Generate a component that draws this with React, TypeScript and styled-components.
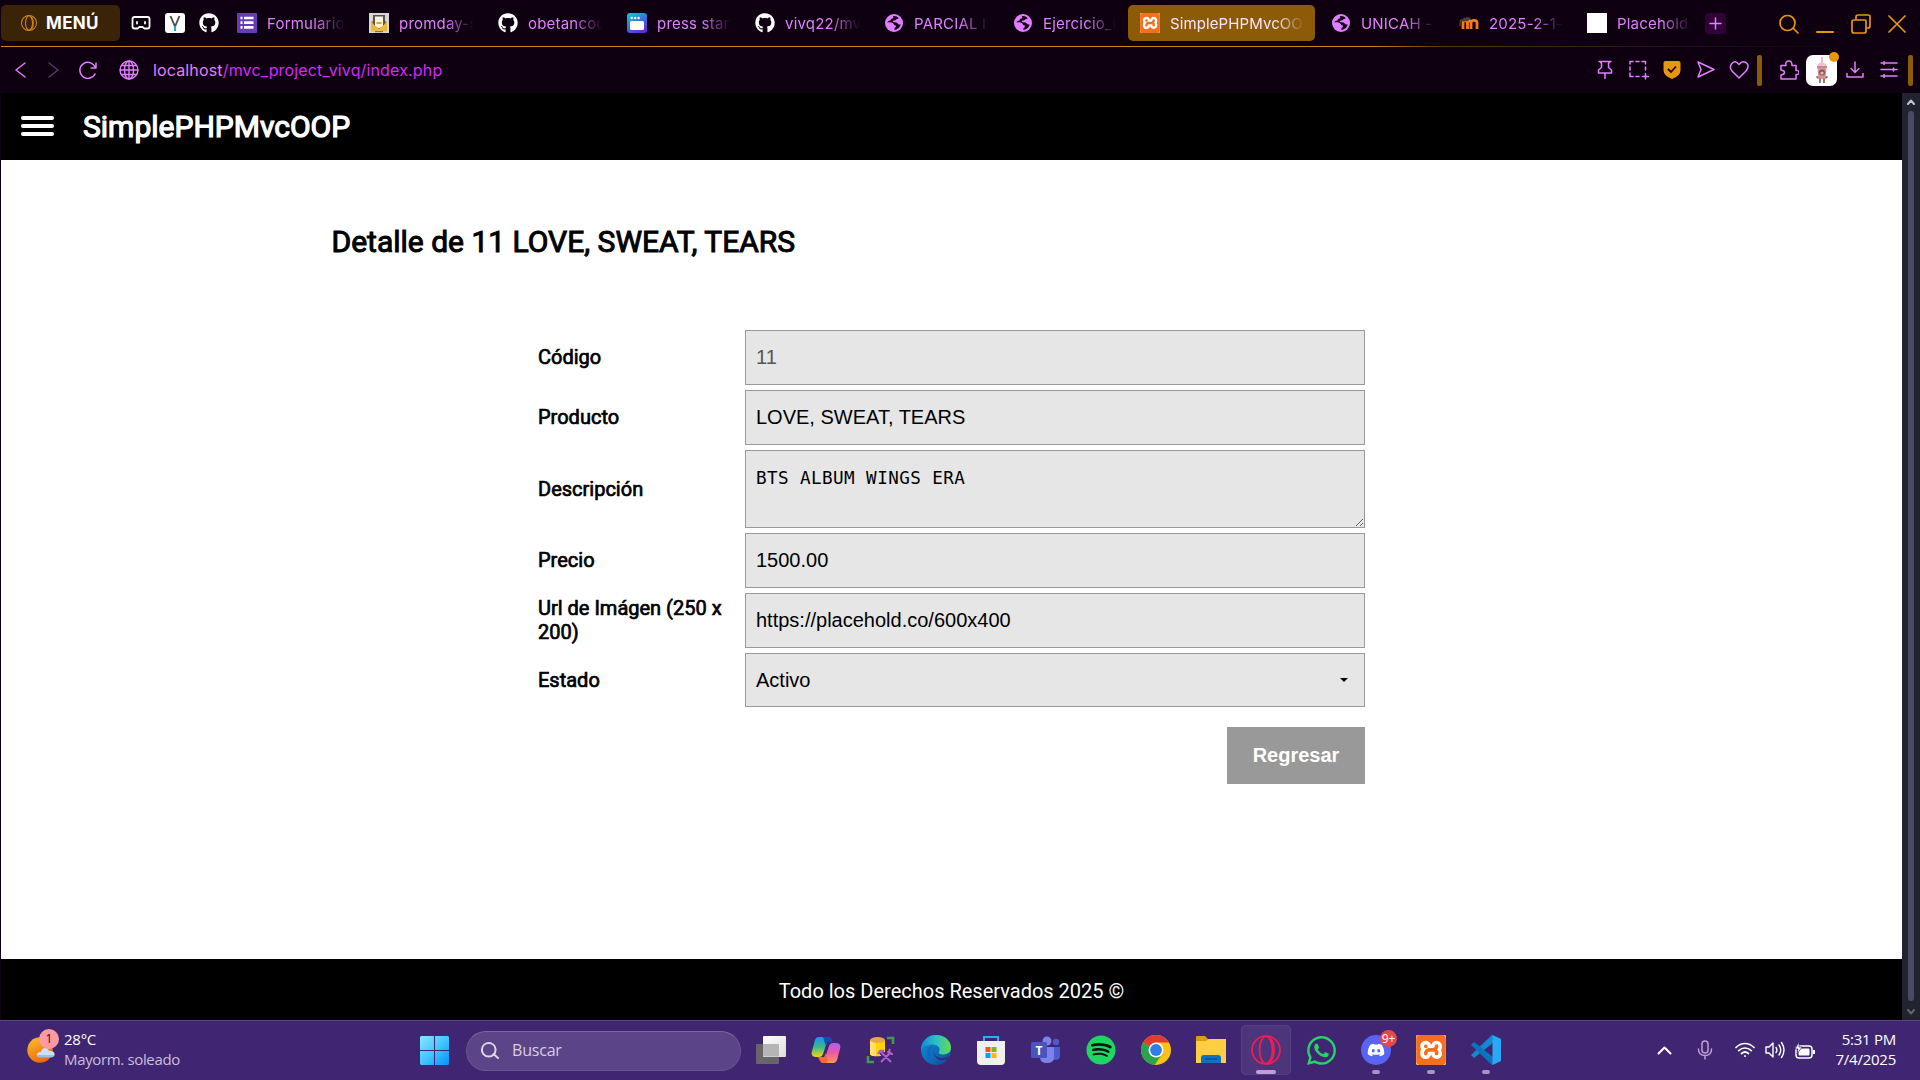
import React from "react";
import styled, { createGlobalStyle, css } from "styled-components";
import { FaGithub, FaWhatsapp, FaSpotify, FaDiscord } from "react-icons/fa";
import { SiXampp } from "react-icons/si";

const Global = createGlobalStyle`
  * { box-sizing: border-box; }
  body { margin: 0; background: #0f0011; }
  svg { display: block; flex: none; }
`;

const ui = `Inter, "Liberation Sans", sans-serif`;
const page = `Roboto, "Liberation Sans", sans-serif`;
const shell = `"Open Sans", "Noto Sans", sans-serif`;
const violet = "#e07fff";
const amber = "#e8960c";

const Screen = styled.div`
  width: 1920px;
  height: 1080px;
  display: flex;
  flex-direction: column;
  overflow: hidden;
  background: #0f0011;
`;

/* ---------- browser chrome ---------- */
const TabStrip = styled.header`
  height: 46px;
  display: flex;
  align-items: flex-start;
  padding: 5px 14px 0 1px;
  font: 400 15px ${ui};
  color: ${violet};
`;
const StripLine = styled.div`
  height: 1px;
  margin-left: 1px;
  background: linear-gradient(90deg, #cf860f 0, #cf860f 1370px, #5a360b 1440px, #2a1510 1640px, #0f0011 1860px);
`;
const MenuButton = styled.button`
  width: 119px;
  height: 36px;
  margin-right: 11px;
  padding: 0 0 0 20px;
  border: 0;
  border-radius: 5px;
  background: #3a2307;
  color: #fff;
  display: flex;
  align-items: center;
  gap: 9px;
  font: 700 17px ${ui};
  letter-spacing: 0.3px;
`;
const Pinned = styled.div`
  width: 94px;
  height: 36px;
  display: flex;
  align-items: center;
  gap: 14px;
`;
const Tab = styled.div<{ $w: number; $active?: boolean }>`
  width: ${(p) => p.$w}px;
  height: 36px;
  flex: none;
  padding: 0 12px;
  display: flex;
  align-items: center;
  gap: 10px;
  ${(p) =>
    p.$active &&
    css`
      margin-right: 4px;
      border-radius: 5px;
      background: #8b5b08;
      color: #fbe3ff;
    `}
`;
const TabTitle = styled.span`
  flex: 1;
  overflow: hidden;
  white-space: nowrap;
  padding-top: 2px;
  line-height: 24px;
  letter-spacing: 0.2px;
  mask-image: linear-gradient(90deg, #000 60%, transparent 100%);
`;
const ActiveTitle = styled(TabTitle)`
  margin-right: -2px;
  letter-spacing: 0.1px;
  mask-image: linear-gradient(90deg, #000 78%, transparent 100%);
`;
const White = styled.span`
  width: 20px;
  height: 20px;
  flex: none;
  background: #fff;
`;
const XamppTile = styled.span<{ $w: number; $h: number }>`
  width: ${(p) => p.$w}px;
  height: ${(p) => p.$h}px;
  flex: none;
  display: grid;
  place-items: center;
  overflow: hidden;
  border-radius: 2px;
  color: #fff;
  background: #f4701c;
`;
const NewTab = styled.button`
  width: 21px;
  height: 21px;
  margin: 8px 0 0 2px;
  padding: 4px;
  border: 0;
  border-radius: 4px;
  background: #320038;
`;
const WindowButtons = styled.div`
  height: 37px;
  margin-left: auto;
  display: flex;
  align-items: center;
  gap: 17px;
  color: ${amber};
`;
const AddressBar = styled.div`
  height: 46px;
  display: flex;
  align-items: center;
  padding: 0 7px 0 15px;
  color: ${violet};
`;
const NavButtons = styled.div`
  display: flex;
  align-items: center;
  gap: 20px;
  margin-right: 22px;
`;
const Address = styled.div`
  margin-left: 14px;
  font: 400 16px ${ui};
  letter-spacing: 0.15px;
  margin-top: -1px;
  color: #d02cf4;
  b { font-weight: 400; color: ${violet}; }
`;
const Actions = styled.div`
  margin-left: auto;
  display: flex;
  align-items: center;
  gap: 14px;
`;
const PageActions = styled.div`
  display: flex;
  align-items: center;
  gap: 13.5px;
`;
const Menu = styled.span`
  margin-left: 2px;
`;
const Divider = styled.span<{ $l: number; $r: number }>`
  width: 5px;
  height: 31px;
  margin: 0 ${(p) => p.$r - 14}px 0 ${(p) => p.$l - 14}px;
  border-radius: 2px;
  background: #8b5b08;
`;
const Avatar = styled.span`
  position: relative;
  width: 31px;
  height: 31px;
  margin: 0 -5px 0 -7px;
  border-radius: 7px;
  background: #fff;
  display: grid;
  place-items: center;
`;
const Dot = styled.i`
  position: absolute;
  right: -2px;
  top: -3px;
  width: 10px;
  height: 10px;
  border-radius: 50%;
  background: ${amber};
`;

/* ---------- web page ---------- */
const Viewport = styled.div`
  height: 927px;
  display: flex;
  padding-left: 1px;
`;
const Site = styled.div`
  width: 1901px;
  display: flex;
  flex-direction: column;
  background: #fff;
  color: #000;
  font-family: ${page};
`;
const SiteHeader = styled.header`
  height: 67px;
  display: flex;
  align-items: center;
  gap: 29px;
  padding: 0 20px;
  background: #000;
  color: #fff;
`;
const Burger = styled.div`
  width: 33px;
  display: grid;
  gap: 4px;
  margin-top: -2px;
  i { height: 4px; border-radius: 2px; background: #fff; }
`;
const Brand = styled.h1`
  margin: 0;
  font: 400 30px/36px ${page};
  -webkit-text-stroke: 1.2px currentColor;
`;
const Main = styled.main`
  flex: 1;
  padding: 64px 536px 0 330.5px;
`;
const Title = styled.h2`
  margin: 0 0 70px;
  font: 400 30px/36px ${page};
  -webkit-text-stroke: 1px currentColor;
`;
const Form = styled.form`
  width: 827px;
  margin: 0 0 0 206.5px;
  display: grid;
  gap: 5px;
`;
const Row = styled.div<{ $h?: number }>`
  height: ${(p) => p.$h ?? 55}px;
  display: grid;
  grid-template-columns: 207px 620px;
  align-items: center;
`;
const Label = styled.label`
  padding: 0 20px 1px 0;
  font: 400 20px/24px ${page};
  -webkit-text-stroke: 0.7px currentColor;
`;
const box = css`
  width: 100%;
  height: 100%;
  margin: 0;
  padding: 0 10px;
  border: 1px solid #999;
  border-radius: 0;
  outline: 0;
  background: #e6e6e6;
  color: #000;
  font: 400 20px "Liberation Sans", Arial, sans-serif;
`;
const Input = styled.input<{ $dim?: boolean }>`
  ${box}
  ${(p) => p.$dim && "color: #555;"}
`;
const Area = styled.textarea`
  ${box}
  display: block;
  padding: 15px 10px;
  font: 400 17.6px/24px "DejaVu Sans Mono", monospace;
  letter-spacing: 0.42px;
  overflow: hidden;
`;
const SelectBox = styled.div`
  ${box}
  display: flex;
  align-items: center;
  justify-content: space-between;
  padding-right: 16px;
`;
const Back = styled.button`
  width: 138px;
  height: 57px;
  margin: 15px 0 0;
  justify-self: end;
  border: 0;
  background: #999;
  color: #fff;
  font: 700 20px "Liberation Sans", Arial, sans-serif;
`;
const SiteFooter = styled.footer`
  height: 61px;
  display: grid;
  place-items: center;
  padding-top: 3px;
  background: #000;
  color: #fff;
  font: 400 20px ${page};
`;
const Scroll = styled.div`
  width: 18px;
  display: flex;
  flex-direction: column;
  align-items: center;
  padding: 6px 0 4px;
  background: #222331;
`;
const Thumb = styled.div`
  width: 6px;
  height: 890px;
  margin: 6px 0 8px;
  border-radius: 3px;
  background: #4b4a63;
`;

/* ---------- taskbar ---------- */
const Taskbar = styled.footer`
  height: 60px;
  display: flex;
  padding: 0 24px 0 27px;
  border-top: 1px solid #5b4779;
  background: #402672;
  color: #fff;
  font-family: ${shell};
`;
const Weather = styled.div`
  width: 383px;
  display: flex;
  align-items: center;
  gap: 7px;
`;
const WeatherIcon = styled.div`
  position: relative;
  width: 30px;
  height: 40px;
`;
const Count = styled.span<{ $bg: string; $fg: string; $size: number; $top: number; $right: number }>`
  position: absolute;
  top: ${(p) => p.$top}px;
  right: ${(p) => p.$right}px;
  width: ${(p) => p.$size}px;
  height: ${(p) => p.$size}px;
  display: grid;
  place-items: center;
  border-radius: 50%;
  background: ${(p) => p.$bg};
  color: ${(p) => p.$fg};
  font: 400 12px ${shell};
`;
const Stack = styled.div<{ $end?: boolean }>`
  display: flex;
  flex-direction: column;
  align-items: ${(p) => (p.$end ? "flex-end" : "flex-start")};
  margin-bottom: 4px;
  font-size: 15px;
  line-height: 20px;
  letter-spacing: -0.25px;
  white-space: nowrap;
`;
const Muted = styled.span`
  color: #c9bedb;
  letter-spacing: -0.35px;
`;
const Start = styled.div`
  width: 56px;
  display: flex;
  align-items: center;
  padding-left: 10px;
`;
const Search = styled.div`
  width: 275px;
  height: 40px;
  align-self: center;
  padding: 0 0 1px 14px;
  display: flex;
  align-items: center;
  gap: 13px;
  border: 1px solid #6a5490;
  border-top-color: #7c689e;
  border-radius: 20px;
  background: #5b4487;
  color: #d7cee2;
  font-size: 16px;
  letter-spacing: -0.2px;
`;
const Apps = styled.div`
  display: flex;
  align-items: center;
  gap: 5px;
  margin: -1px 0 0 5px;
`;
const TaskApp = styled.div<{ $on?: boolean }>`
  position: relative;
  width: 50px;
  height: 50px;
  display: grid;
  place-items: center;
  border-radius: 5px;
  ${(p) => p.$on && "background: #4d357c; box-shadow: inset 0 0 0 1px #573f84;"}
`;
const Running = styled.i<{ $wide?: boolean }>`
  position: absolute;
  bottom: 1px;
  left: 50%;
  width: ${(p) => (p.$wide ? 20 : 8)}px;
  height: 4px;
  border-radius: 2px;
  transform: translateX(-50%);
  background: ${(p) => (p.$wide ? "#c39ddb" : "#a794c3")};
`;
const Tray = styled.div`
  margin-left: auto;
  display: flex;
  align-items: center;
`;
const TrayIcon = styled.span<{ $gap: number }>`
  margin: -1px ${(p) => p.$gap}px 0 0;
`;

type LineProps = { w: number; h?: number; box?: string; d: string; sw?: number; color?: string; children?: React.ReactNode };
const Line = ({ w, h = w, box: vb, d, sw = 1.5, color = "currentColor", children }: LineProps) => (
  <svg width={w} height={h} viewBox={vb ?? `0 0 ${w} ${h}`} fill="none" stroke={color} strokeWidth={sw} strokeLinecap="round" strokeLinejoin="round">
    <path d={d} />
    {children}
  </svg>
);

const Earth = () => (
  <svg width="20" height="20" viewBox="0 0 20 20">
    <circle cx="10" cy="10" r="9" fill={violet} />
    <path d="M8.800 3.200c1.300 1 .2 2.300-1.200 2.500-.9.200-.5 1.600-1.500 1.900-1 .2-1.800.6-2.900 1.700 2 .4 4.200-.2 5.600.7 1.200.9.800 2 2.100 2.300 1.400.3 1.500 1.500.2 2.300-.7.500-.6 1.300-.9 2.200 3.200-.2 5.800-2.500 6.500-5.400-1.300.4-2.400.3-3-.8-.8-1.400-2.300-1.200-4-1.300-1.100-.1-1.300-1.500-.1-1.800.9-.2 1.500.1 2.200-.8.600-.8 2-.5 2.900-1.400-1.300-1.700-3.600-2.600-5.900-2.100z" fill="#140017" />
  </svg>
);
const FormIcon = () => (
  <svg width="20" height="20"><rect width="20" height="20" rx="1" fill="#673ab7" /><path d="M3.500 5h2M3.500 9.700h2M3.500 14.400h2M7 5h9.500M7 9.700h9.500M7 14.400h9.500" stroke="#fff" strokeWidth="2.700" /></svg>
);
const Envelope = () => (
  <svg width="20" height="20"><rect width="20" height="20" fill="#d8d8d5" /><path d="M2 9l8-6 8 6v9H2z" fill="#c99022" /><path d="M4 2h12v11l-6 4-6-4z" fill="#55534f" /><path d="M6 3.500h8v10l-4 2-4-2z" fill="#f7f1df" /><path d="M2 9l8 7 8-7v9.500H2z" fill="#edb83d" /><path d="M6 8h8v4l-4 2.500L6 12z" fill="#fff3ce" /><path d="M7.500 10h5" stroke="#d7a33c" strokeWidth="2" /><path d="M6 18.700h8" stroke="#775d25" /></svg>
);
const PressIcon = () => (
  <svg width="20" height="20"><defs><linearGradient id="press" x2=".6" y2="1"><stop stopColor="#00d4c8" /><stop offset=".5" stopColor="#347dd8" /><stop offset="1" stopColor="#652ce2" /></linearGradient></defs><rect width="20" height="20" rx="3" fill="url(#press)" /><rect x="3" y="8" width="14" height="9" rx="1.500" fill="#fff" /><g fill="#fff"><circle cx="4.700" cy="5" r="1.200" /><circle cx="8.200" cy="5" r="1.200" /><circle cx="11.600" cy="5" r="1.200" /></g></svg>
);
const Moodle = () => (
  <svg width="20" height="20" fill="none"><path d="M4 16V10q0-2.300 2-2.300T8.500 10v6M12 16v-6q0-2.700 3-2.700T18 10v6M12 10q0-2.500-3.500-2.500" stroke="#f47c20" strokeWidth="2.800" /><path d="M1 7l7-3 4 1-3 3-5 .5z" fill="#4c4142" /><path d="M1.500 7L.8 13" stroke="#744e3b" /></svg>
);
const Yv = () => (
  <svg width="20" height="20"><rect width="20" height="20" rx="3" fill="#fff" /><path d="M5.500 3L10 13.500M14.500 3L10 13.500" stroke="#4d4d52" strokeWidth="1.900" fill="none" /><path d="M10 13v5" stroke="#20a5dd" strokeWidth="2.200" /></svg>
);
const Drink = () => (
  <svg width="14" height="28" viewBox="0 0 14 28"><path d="M7 1v7" stroke="#e58aa6" strokeWidth="1.200" /><path d="M2.500 10q.5-3.500 4.500-3.500t4.500 3.500z" fill="#efc3cc" /><path d="M2 10h10v2H2z" fill="#cf8296" /><path d="M2.500 12h9l-1 11h-7z" fill="#d98fa2" /><rect x="4" y="13.500" width="6" height="6" rx="3" fill="#755e53" /><circle cx="7" cy="17" r="1.600" fill="#dcc5a5" /><path d="M5 22.500V27M9 22.500V27M1.500 20.500l2 1.500M12.500 20.500l-2 1.500" stroke="#99684e" strokeWidth="1.800" /></svg>
);

/* taskbar app drawings */
const WinLogo = () => (
  <svg width="29" height="29"><defs><linearGradient id="win" x2="1" y2="1"><stop stopColor="#8be5ff" /><stop offset=".5" stopColor="#43c6ff" /><stop offset="1" stopColor="#078fff" /></linearGradient></defs><path d="M1 0h13v14H0V1zM15 0h13l1 1v13H15zM0 15h14v14H1l-1-1zM15 15h14v13l-1 1H15z" fill="url(#win)" /></svg>
);
const TaskView = () => (
  <svg width="30" height="28"><defs><linearGradient id="tv" x2="1" y2="1"><stop stopColor="#fff" /><stop offset="1" stopColor="#ddd" /></linearGradient></defs><rect y="8" width="23" height="20" rx="1" fill="#676568" /><rect x="7" y="0" width="23" height="21" rx="1" fill="url(#tv)" /><path d="M7 8h16v12.500H8l-1-1z" fill="#b5b4b6" /></svg>
);
const Copilot = () => (
  <svg width="30" height="28" viewBox="0 0 30 28"><defs><linearGradient id="cp1" x2="0" y2="1"><stop stopColor="#1696ee" /><stop offset=".5" stopColor="#39b98a" /><stop offset="1" stopColor="#f2d90b" /></linearGradient><linearGradient id="cp2" x2="0" y2="1"><stop stopColor="#ae5df0" /><stop offset=".5" stopColor="#ee5aa2" /><stop offset="1" stopColor="#ff9b51" /></linearGradient></defs><path d="M8 1h10c2 0 2 2 3 5h-5l-4 12c-.7 2-2 3-4 3H5c-4 0-5-3-4-6L4 4c.7-2 2-3 4-3z" fill="url(#cp1)" /><path d="M12 1h6c2 0 2.500 2 3.500 5H18c-2 0-3 1-3.500 3z" fill="#174bb4" /><path d="M22 27H12c-2 0-2-2-3-5h5l4-12c.7-2 2-3 4-3h3c4 0 5 3 4 6l-3 11c-.7 2-2 3-4 3z" fill="url(#cp2)" /><path d="M7 21h6l2-4 2 8q-1 2-3 2h-2c-2 0-3-2-5-6z" fill="#f46b32" /></svg>
);
const Ssms = () => (
  <svg width="30" height="30" fill="none"><path d="M21 3h6v6M2 21v6h6" stroke="#3f9b48" strokeWidth="2.600" /><path d="M4 5v14c0 3 15 3 15 0V5z" fill="#ffd400" /><path d="M4 5v14c0 1.500 3 2.200 6 2.300V5z" fill="#ffe168" /><ellipse cx="11.500" cy="5" rx="7.500" ry="3" fill="#eda44e" /><path d="M14 27l11-11M15 17l10 10" stroke="#402672" strokeWidth="5" /><path d="M15 27l10-10M15 17l10 10M12 19q2-5 6-3M22 16q0 3 5 3m-3-5l-2 4" stroke="#b45bd0" strokeWidth="2" /></svg>
);
const Edge = () => (
  <svg width="30" height="30" viewBox="0 0 30 30"><defs><linearGradient id="ed1" x2="1"><stop stopColor="#1688d8" /><stop offset=".5" stopColor="#2ac1c6" /><stop offset="1" stopColor="#64db52" /></linearGradient><linearGradient id="ed2" x2="1" y2="1"><stop stopColor="#1192d8" /><stop offset="1" stopColor="#0c4b9a" /></linearGradient></defs><circle cx="15" cy="15" r="15" fill="url(#ed2)" /><path d="M0 15C0 6 7 0 15 0c9 0 15 6 15 12.500 0 5-4 7-8 7-3 0-5-1-4-3 2-3-1-7-6-7C6 9.500 1 12 0 15z" fill="url(#ed1)" /><path d="M12 11c-5 4-4 13 3 18-7-1-10-7-9-12 .6-4 3-6 6-6z" fill="#086cc5" /><path d="M13 13c-2 5 2 10 8 10 3 0 5-.6 7-2l-1 3c-6 3-12 1-14-5-.7-2-.7-4 0-6z" fill="#402672" /></svg>
);
const Store = () => (
  <svg width="30" height="30"><path d="M8 7V2h14v5" fill="none" stroke="#1eb5eb" strokeWidth="2" /><path d="M1 6h28v20q0 4-4 4H5q-4 0-4-4z" fill="#f0f0f0" /><path d="M9.500 12h5v5h-5z" fill="#f25022" /><path d="M15.500 12h5v5h-5z" fill="#7fba00" /><path d="M9.500 18h5v5h-5z" fill="#00a4ef" /><path d="M15.500 18h5v5h-5z" fill="#ffb900" /></svg>
);
const TeamsT = styled.span`
  position: absolute;
  left: 10px;
  top: 17px;
  width: 16px;
  height: 17px;
  text-align: center;
  font: 700 12px/17px ${shell};
`;
const Teams = () => (
  <><svg width="30" height="28"><circle cx="16" cy="5" r="4.500" fill="#7b83eb" /><circle cx="25" cy="6" r="3.200" fill="#5059c9" /><path d="M20 11h9v9q0 4-5 4h-4z" fill="#5059c9" /><path d="M9 11h14v10q0 6-7 6t-7-6z" fill="#7b83eb" /><rect y="6" width="16" height="16" rx="1.500" fill="#4b53bc" /></svg><TeamsT>T</TeamsT></>
);
const Chrome = () => (
  <svg width="30" height="30" viewBox="0 0 30 30"><circle cx="15" cy="15" r="15" fill="#fbc116" /><path d="M15 15L2 7.500A15 15 0 0 0 13.500 30L21.500 18.500z" fill="#2ba24c" /><path d="M15 15L2 7.500A15 15 0 0 1 28 7.500H15z" fill="#e33b2e" /><circle cx="15" cy="15" r="7.500" fill="#fff" /><circle cx="15" cy="15" r="5.900" fill="#2f7de9" /></svg>
);
const Explorer = () => (
  <svg width="30" height="28"><path d="M0 1q0-1 1-1h8l3 3h17q1 0 1 1v8H0z" fill="#dd9d08" /><path d="M0 5h10l3-2h17v24H0z" fill="#ffcf43" /><path d="M5 27v-5q0-3 3-3h14q3 0 3 3v5z" fill="#0c72c2" /><path d="M9 23h12" stroke="#07529a" strokeWidth="1.500" /></svg>
);
const Opera = ({ s, c }: { s: number; c: string }) => (
  <svg width={s} height={s} viewBox="0 0 30 30" fill="none" stroke={c} strokeWidth={s > 20 ? 1.7 : 1.9}><circle cx="15" cy="15" r="14" /><ellipse cx="15" cy="15" rx="6.500" ry="13.500" /><path d="M18 3q5 2 5 12t-5 12" /></svg>
);
const VsCode = () => (
  <svg width="30" height="30" viewBox="0 0 30 30"><path d="M22 8L3 23l-3-3L21 0h1z" fill="#1389d0" /><path d="M22 22L3 7l-3 3 21 20h1z" fill="#0b74bd" /><path d="M21.500 0L30 4v22l-8.500 4z" fill="#2aa8f4" /></svg>
);
const SunCloud = () => (
  <svg width="30" height="40" viewBox="0 0 30 40"><defs><linearGradient id="sun" x2=".5" y2="1"><stop stopColor="#f6c330" /><stop offset="1" stopColor="#f26808" /></linearGradient></defs><circle cx="13" cy="19" r="12.700" fill="url(#sun)" /><path d="M13 26q-4 0-3-3 1-2.500 4-2 1-4 4-4t4 3q5-.5 5.500 2.500T25 26z" fill="#c9e1fa" /><path d="M10 24h17q-.5 2.500-3 2.500H13q-2.500 0-3-2.500z" fill="#9abdea" /></svg>
);

const tabsLeft = [
  { w: 132, icon: <FormIcon />, t: "Formulario" },
  { w: 129, icon: <Envelope />, t: "promday-s" },
  { w: 129, icon: <FaGithub size={20} color="#fff" />, t: "obetancou" },
  { w: 128, icon: <PressIcon />, t: "press start" },
  { w: 129, icon: <FaGithub size={20} color="#fff" />, t: "vivq22/mv" },
  { w: 129, icon: <Earth />, t: "PARCIAL I" },
  { w: 127, icon: <Earth />, t: "Ejercicio_P" },
];
const tabsRight = [
  { w: 128, icon: <Earth />, t: "UNICAH - " },
  { w: 128, icon: <Moodle />, t: "2025-2-1-" },
  { w: 128, icon: <White />, t: "Placehold" },
];

export default function App() {
  return (
    <Screen>
      <Global />
      <TabStrip>
        <MenuButton><Opera s={16} c="#d98a0e" />MENÚ</MenuButton>
        <Pinned>
          <Line w={20} color="#fff" sw={1.8} d="M3.500 4h13q2 0 2 2v7.500q0 2-2 2h-3L11.500 14h-3l-2 1.500h-3q-2 0-2-2V6q0-2 2-2zM6 9v1.500M14 9v1.500" />
          <Yv />
          <FaGithub size={20} color="#fff" />
        </Pinned>
        {tabsLeft.map((t) => <Tab key={t.t} $w={t.w}>{t.icon}<TabTitle>{t.t}</TabTitle></Tab>)}
        <Tab $w={187} $active>
          <XamppTile $w={20} $h={20}><SiXampp size={20} color="#f4701c" style={{ background: "#fff" }} /></XamppTile>
          <ActiveTitle>SimplePHPMvcOOP</ActiveTitle>
        </Tab>
        {tabsRight.map((t) => <Tab key={t.t} $w={t.w}>{t.icon}<TabTitle>{t.t}</TabTitle></Tab>)}
        <NewTab><Line w={13} color={violet} d="M6.500 1v11M1 6.500h11" /></NewTab>
        <WindowButtons>
          <Line w={20} d="M16 9A7.500 7.500 0 1 1 1 9a7.500 7.500 0 0 1 15 0zM14.500 14.500l4.500 4.500" sw={1.7} />
          <Line w={18} h={20} d="M1 18h16" sw={2} />
          <Line w={20} d="M3 6h11q1 0 1 1v10q0 2-2 2H3q-2 0-2-2V8q0-2 2-2zM5 5V3q0-2 2-2h10q2 0 2 2v9q0 2-2 2h-2" sw={1.7} />
          <Line w={18} d="M1 1l16 16M17 1L1 17" sw={1.7} />
        </WindowButtons>
      </TabStrip>
      <StripLine />
      <AddressBar>
        <NavButtons>
          <Line w={11} h={16} d="M10 1L1 8l9 7" />
          <Menu><Line w={11} h={16} d="M1 1l9 7-9 7" color="#5f3470" /></Menu>
          <Line w={18} d="M17 2v5h-5M16.500 7A8 8 0 1 0 16 13" />
        </NavButtons>
        <Line w={20} d="M19 10a9 9 0 1 1-18 0 9 9 0 0 1 18 0zM10 1v18M1 10h18M2.500 5.500h15M2.500 14.500h15" sw={1.4}><ellipse cx="10" cy="10" rx="4.500" ry="9" /></Line>
        <Address><b>localhost</b>/mvc_project_vivq/index.php</Address>
        <Actions>
          <PageActions>
            <Line w={20} d="M4 1.500h12M5 1.500l1.500 2v4L3.500 10v3h13v-3l-3-2.500v-4l1.500-2M10 13v5.500" />
            <Line w={20} d="M1 4V1.500h3M7 1.500h3M13 1.500h3.500V4M16.500 7v3M1 7v3M1 13v3.500h3M7 16.500h3M16.500 13.500v5.500M13.500 16.500h6" />
            <svg width="20" height="20"><path d="M3.500 1h13q2 0 2 2v7q0 6-8.500 9Q1.500 16 1.500 10V3q0-2 2-2z" fill={amber} /><path d="M6 9l3 3 5-5.500" fill="none" stroke="#1a0018" strokeWidth="1.800" /></svg>
            <Line w={20} d="M2 2l16 7.500L2 17l3-7.500z" />
            <Line w={20} d="M10 18L3 11Q0 7.500 2.500 4T8 2.500l2 2 2-2q3.500-2 6 1T17 11z" />
          </PageActions>
          <Divider $l={8} $r={17} />
          <Line w={20} d="M2 5.500h5Q6 1.500 9.500 1t3.500 4.500h4v5q3-.5 3 2t-3 2V19H2v-4q3.500-.5 3.500-2.500T2 10z" />
          <Avatar><Drink /><Dot /></Avatar>
          <Line w={18} h={20} d="M9 2v10M5 8.500l4 4 4-4M1 13.500V17h16v-3.500" />
          <Menu><Line w={18} h={20} d="M1 3h16M1 9.500h16M1 16h16M4 1.500v3M13.500 8v3M4 14.500v3" /></Menu>
          <Divider $l={10} $r={14} />
        </Actions>
      </AddressBar>

      <Viewport>
        <Site>
          <SiteHeader><Burger><i /><i /><i /></Burger><Brand>SimplePHPMvcOOP</Brand></SiteHeader>
          <Main>
            <Title>Detalle de 11 LOVE, SWEAT, TEARS</Title>
            <Form>
              <Row><Label>Código</Label><Input readOnly $dim value="11" /></Row>
              <Row><Label>Producto</Label><Input readOnly value="LOVE, SWEAT, TEARS" /></Row>
              <Row $h={78}><Label>Descripción</Label><Area readOnly spellCheck={false} value="BTS ALBUM WINGS ERA" /></Row>
              <Row><Label>Precio</Label><Input readOnly value="1500.00" /></Row>
              <Row><Label>Url de Imágen (250 x 200)</Label><Input readOnly value="https://placehold.co/600x400" /></Row>
              <Row $h={54}><Label>Estado</Label><SelectBox>Activo<svg width="8" height="4"><path d="M0 0h8L4 4z" /></svg></SelectBox></Row>
              <Back type="button">Regresar</Back>
            </Form>
          </Main>
          <SiteFooter>Todo los Derechos Reservados 2025 ©</SiteFooter>
        </Site>
        <Scroll>
          <Line w={8} h={6} color="#c4c4c8" sw={2} d="M1 5l3-3.500L7 5" />
          <Thumb />
          <Line w={8} h={6} color="#64646c" sw={2} d="M1 1l3 3.500L7 1" />
        </Scroll>
      </Viewport>

      <Taskbar>
        <Weather>
          <WeatherIcon><SunCloud /><Count $bg="#ff99a4" $fg="#111" $size={20} $top={-2} $right={-2}>1</Count></WeatherIcon>
          <Stack><span>28°C</span><Muted>Mayorm. soleado</Muted></Stack>
        </Weather>
        <Start><WinLogo /></Start>
        <Search><Line w={18} d="M14.500 8A6.800 6.800 0 1 1 1 8a6.800 6.800 0 0 1 13.500 0zM12.500 13l4.500 4" sw={2} color="#ded6e8" />Buscar</Search>
        <Apps>
          <TaskApp><TaskView /></TaskApp>
          <TaskApp><Copilot /></TaskApp>
          <TaskApp><Ssms /></TaskApp>
          <TaskApp><Edge /></TaskApp>
          <TaskApp><Store /></TaskApp>
          <TaskApp><Teams /></TaskApp>
          <TaskApp><svg width="30" height="30"><circle cx="15" cy="15" r="12" fill="#111" /><FaSpotify size={30} color="#1ed760" /></svg></TaskApp>
          <TaskApp><Chrome /></TaskApp>
          <TaskApp><Explorer /></TaskApp>
          <TaskApp $on><Opera s={30} c="#f51b52" /><Running $wide /></TaskApp>
          <TaskApp><FaWhatsapp size={33} color="#25d366" /></TaskApp>
          <TaskApp><svg width="30" height="30"><circle cx="15" cy="15" r="15" fill="#5865f2" /><FaDiscord x={6} y={6} size={18} color="#fff" /></svg><Count $bg="#e5484d" $fg="#fff" $size={17} $top={5} $right={4}>9+</Count><Running /></TaskApp>
          <TaskApp><XamppTile $w={30} $h={30}><SiXampp size={30} color="#f4701c" style={{ background: "#fff" }} /></XamppTile><Running /></TaskApp>
          <TaskApp><VsCode /><Running /></TaskApp>
        </Apps>
        <Tray>
          <TrayIcon $gap={25}><Line w={15} h={10} d="M1.500 8.500l6-6 6 6" sw={2} /></TrayIcon>
          <TrayIcon $gap={22}><Line w={16} h={20} color="#bd9fd6" d="M8 1q3 0 3 3v6q0 3-3 3t-3-3V4q0-3 3-3zM1.500 9q0 6.500 6.500 6.500T14.500 9M8 15.500V19" /></TrayIcon>
          <TrayIcon $gap={10}><Line w={20} h={16} d="M1 5.500Q5 1.500 10 1.500t9 4M3.700 8.700Q6.500 6 10 6t6.300 2.700M6.500 11.500q3.500-3 7 0M9.700 14h.6" sw={1.7} /></TrayIcon>
          <TrayIcon $gap={10}><Line w={20} h={18} d="M1 6h3l4-4v14l-4-4H1zM11 6.500q1.800 2.500 0 5M14 4q3.500 5 0 10M16.500 1.500q5 7.500 0 15" sw={1.4} /></TrayIcon>
          <TrayIcon $gap={21}><svg width="20" height="17"><rect x="1" y="4" width="16" height="12" rx="3" fill="none" stroke="#fff" strokeWidth="1.500" /><rect x="3.500" y="6.500" width="11" height="7" rx="1" fill="#fff" /><path d="M18 8h2v4h-2z" fill="#fff" /><path d="M4 0L0 7h3l-1 5 5-7H4z" fill="#fff" stroke="#402672" strokeWidth=".7" /></svg></TrayIcon>
          <Stack $end><span>5:31 PM</span><span>7/4/2025</span></Stack>
        </Tray>
      </Taskbar>
    </Screen>
  );
}
